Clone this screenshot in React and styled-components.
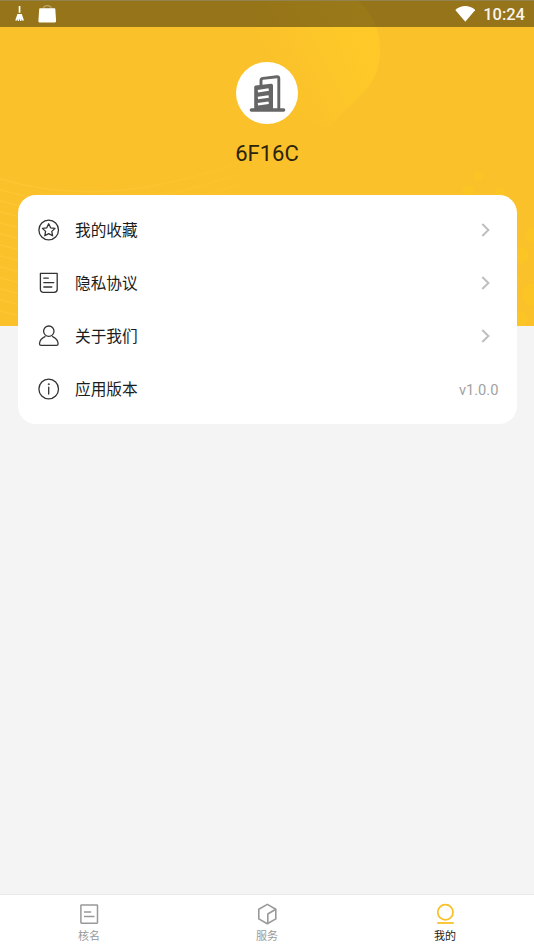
import styled, { createGlobalStyle } from 'styled-components';

const GlobalStyle = createGlobalStyle`
  * {
    box-sizing: border-box;
  }
  body {
    margin: 0;
    background: #f4f4f4;
    font-family: Roboto, 'Noto Sans CJK SC', sans-serif;
  }
  svg {
    display: block;
    flex-shrink: 0;
  }
`;

const Page = styled.div`
  position: relative;
  display: flex;
  flex-direction: column;
  height: 949px;
  overflow: hidden;
`;

const HeroArt = styled.svg`
  position: absolute;
  top: 0;
  left: 0;
  z-index: -1;
`;

const StatusBar = styled.header`
  display: flex;
  align-items: center;
  height: 27px;
  padding: 0 9px 0 14px;
  background: rgba(0, 0, 0, 0.4);
  border-top: 1px solid #92824f;
  color: #fff;
`;

const StatusIcons = styled.div`
  display: flex;
  gap: 12px;
  flex: 1;
`;

const Clock = styled.span`
  margin-left: 8px;
  padding-top: 1px;
  font-size: 16.5px;
  font-weight: 500;
  line-height: 26px;
  color: #f8f5ee;
`;

const Profile = styled.section`
  display: flex;
  flex-direction: column;
  align-items: center;
  height: 168.4px;
  padding-top: 35px;
`;

const Avatar = styled.div`
  display: flex;
  width: 62px;
  height: 62px;
  border-radius: 50%;
  background: #fff;
`;

const UserName = styled.div`
  margin-top: 15px;
  font-size: 22px;
  line-height: 30px;
  color: #2b230b;
`;

const Menu = styled.ul`
  margin: 0 17.5px;
  padding: 8px 18px 9px 20px;
  list-style: none;
  background: #fff;
  border-radius: 18px;
`;

const MenuItem = styled.li`
  display: flex;
  align-items: center;
  height: 53px;
`;

const MenuLabel = styled.span`
  flex: 1;
  margin-left: 15.5px;
  padding-top: 2px;
  font-size: 15.7px;
  line-height: 24px;
  color: #1c1c1c;
`;

const Version = styled.span`
  padding-top: 2px;
  font-size: 14.7px;
  color: #a2a2a2;
`;

const TabBar = styled.nav`
  display: flex;
  height: 55px;
  margin-top: auto;
  background: #fff;
  border-top: 1px solid #e9e9e9;
`;

const Tab = styled.div`
  display: flex;
  flex: 1;
  flex-direction: column;
  align-items: center;
  padding-top: 7px;
  font-size: 11px;
  line-height: 16px;
  color: ${(props) => (props.$active ? '#222' : '#999')};
`;

const TabLabel = styled.span`
  margin-top: 3px;
`;

const dots = [
  [478, 176, 4.5],
  [468, 191, 6],
  [500, 192, 4.5],
  [517, 213, 3],
  [532, 235, 7],
  [521, 255, 8],
  [514, 278, 6],
  [533, 295, 11],
  [520, 319, 8],
];

function HeroBackground() {
  return (
    <HeroArt width="534" height="326" viewBox="0 0 534 326">
      <defs>
        <linearGradient id="glow" gradientUnits="userSpaceOnUse" x1="372" y1="35" x2="275" y2="87">
          <stop offset="0" stopColor="#ffca28" />
          <stop offset="1" stopColor="#ffca28" stopOpacity="0" />
        </linearGradient>
        <linearGradient id="fade" gradientUnits="userSpaceOnUse" x1="0" y1="0" x2="240" y2="0">
          <stop offset="0" stopColor="#fdc735" />
          <stop offset="1" stopColor="#fdc735" stopOpacity="0.2" />
        </linearGradient>
      </defs>
      <rect width="534" height="326" fill="#fac12a" />
      <path d="M230 0H357C373 13 380 31 380 51C380 69 373 83 361 95L329 127L270 110Z" fill="url(#glow)" />
      <g fill="none" stroke="url(#fade)" strokeWidth="1.4">
        {[0, 11, 22, 33, 44, 55, 66, 77, 88, 99, 110, 121, 132].map((y) => (
          <path key={y} d={`M-2 ${178 + y}C70 ${201 + y} 150 ${195 + y} 240 ${162 + y}`} />
        ))}
      </g>
      <g fill="#fac525">
        {dots.map(([x, y, r]) => (
          <circle key={`${x}-${y}`} cx={x} cy={y} r={r} />
        ))}
      </g>
    </HeroArt>
  );
}

function BroomIcon() {
  return (
    <svg width="12" height="18" viewBox="14 5 12 18" fill="#fff">
      <path d="M18.7 6h1.7v6.8h-1.7zM17.4 14h4.4l2.2 6.5h-2l-.7-2 .1 2.5h-1.2l-.6-2.4-.7 2.4h-1.2l.1-2.5-.8 2h-1.8z" />
    </svg>
  );
}

function BagIcon() {
  return (
    <svg width="18" height="18" viewBox="38 5 18 18">
      <path d="M43.3 9C43.3 4.5 51.3 4.5 51.3 9" fill="none" stroke="#b9a675" strokeWidth="1.1" />
      <path d="M40 8.3h14.5q.7 0 .8.7l.8 12q0 1.4-1.4 1.4H39.7q-1.4 0-1.3-1.4l.8-12q.1-.7.8-.7z" fill="#fff" />
    </svg>
  );
}

function WifiIcon() {
  return (
    <svg width="20" height="17" viewBox="455 5 20 17">
      <path d="M455.3 9C461 3.8 469.5 3.8 475.2 9L465.3 20.7Z" fill="#fff" />
    </svg>
  );
}

function BuildingIcon() {
  return (
    <svg width="62" height="62" viewBox="236 62 62 62" fill="none" stroke="#666" strokeLinecap="round" strokeLinejoin="round">
      <path d="M261 85V80.5Q261 78.6 263 78.4L277 76.7Q278.8 76.5 278.8 78.5V109" strokeWidth="2.9" />
      <path d="M251.4 110H283.6" strokeWidth="3.4" />
      <path d="M254.2 87Q254.2 85.7 255.7 85.5L271 83.8Q273 83.6 273 85.5V110H254.2Z" fill="#666" stroke="none" />
      <path d="M257.9 91.2L268.7 89.4M257.9 98L268.7 96.4M257.9 104.3L268.7 102.7" stroke="#fff" strokeWidth="2.5" strokeLinecap="butt" />
    </svg>
  );
}

const lineIcon = {
  width: 22,
  height: 22,
  fill: 'none',
  stroke: '#333',
  strokeWidth: 1.3,
  strokeLinecap: 'round',
  strokeLinejoin: 'round',
};

function StarIcon() {
  return (
    <svg {...lineIcon} viewBox="0 0 22 22">
      <circle cx="10.7" cy="11" r="9.8" />
      <path d="M10.7 4.8L12.6 8.8L17 9.4L13.8 12.4L14.6 16.8L10.7 14.6L6.8 16.8L7.6 12.4L4.4 9.4L8.8 8.8Z" />
    </svg>
  );
}

function PolicyIcon() {
  return (
    <svg {...lineIcon} viewBox="0 0 22 22">
      <path d="M2.4 1.4H19.2V17.2Q19.2 20.3 16.1 20.3H5.5Q2.4 20.3 2.4 17.2Z" />
      <path d="M5.8 6.2H10.3M5.8 10.6H15.8M5.8 15H13.8" />
    </svg>
  );
}

function PersonIcon() {
  return (
    <svg {...lineIcon} viewBox="0 0 22 22">
      <circle cx="10.8" cy="6.2" r="5.2" />
      <path d="M7 11.6C3.8 13 1.6 15.6 1.5 18.8Q1.5 20.4 3.1 20.4H18.5Q20.1 20.4 20.1 18.8C20 15.6 17.8 13 14.6 11.6" />
    </svg>
  );
}

function InfoIcon() {
  return (
    <svg {...lineIcon} viewBox="0 0 22 22">
      <circle cx="10.7" cy="11" r="9.8" />
      <path d="M10.7 9.2V16" />
      <circle cx="10.7" cy="6.2" r=".65" fill="#333" strokeWidth=".5" />
    </svg>
  );
}

function ArrowIcon() {
  return (
    <svg width="27" height="16" viewBox="0 0 27 16" fill="none" stroke="#bfbfbf" strokeWidth="2">
      <path d="M10.3 2L16.4 8L10.3 14" />
    </svg>
  );
}

function NamingIcon() {
  return (
    <svg width="24" height="24" viewBox="0 0 24 24" fill="none" stroke="#999" strokeWidth="1.5">
      <rect x="3.9" y="3" width="16.6" height="18.2" rx=".6" />
      <path d="M7 10H14.2M7 14.5H17.5" />
    </svg>
  );
}

function ServiceIcon() {
  return (
    <svg width="24" height="24" viewBox="0 0 24 24" fill="none" stroke="#999" strokeWidth="1.6" strokeLinejoin="round">
      <path d="M12.3 2.4L20.8 7.2V16.9L12.3 21.7L3.8 16.9V7.2Z" />
      <path d="M20.8 7.2L12.8 12V21.5" />
    </svg>
  );
}

function MineIcon() {
  return (
    <svg width="24" height="24" viewBox="0 0 24 24" fill="none" stroke="#fac12a" strokeWidth="1.8">
      <circle cx="12.4" cy="10.3" r="7.6" />
      <path d="M4.2 21H20.8" />
    </svg>
  );
}

const menu = [
  { label: '我的收藏', icon: <StarIcon /> },
  { label: '隐私协议', icon: <PolicyIcon /> },
  { label: '关于我们', icon: <PersonIcon /> },
  { label: '应用版本', icon: <InfoIcon />, value: 'v1.0.0' },
];

const tabs = [
  { label: '核名', icon: <NamingIcon /> },
  { label: '服务', icon: <ServiceIcon /> },
  { label: '我的', icon: <MineIcon />, active: true },
];

function App() {
  return (
    <Page>
      <GlobalStyle />
      <HeroBackground />
      <StatusBar>
        <StatusIcons>
          <BroomIcon />
          <BagIcon />
        </StatusIcons>
        <WifiIcon />
        <Clock>10:24</Clock>
      </StatusBar>
      <Profile>
        <Avatar>
          <BuildingIcon />
        </Avatar>
        <UserName>6F16C</UserName>
      </Profile>
      <Menu>
        {menu.map((item) => (
          <MenuItem key={item.label}>
            {item.icon}
            <MenuLabel>{item.label}</MenuLabel>
            {item.value ? <Version>{item.value}</Version> : <ArrowIcon />}
          </MenuItem>
        ))}
      </Menu>
      <TabBar>
        {tabs.map((tab) => (
          <Tab key={tab.label} $active={tab.active}>
            {tab.icon}
            <TabLabel>{tab.label}</TabLabel>
          </Tab>
        ))}
      </TabBar>
    </Page>
  );
}

export default App;
